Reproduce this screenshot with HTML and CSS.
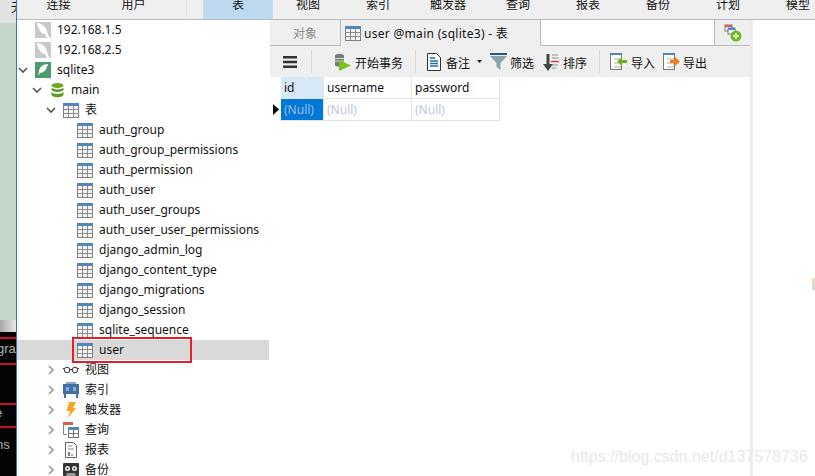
FILE: index.html
```html
<!DOCTYPE html>
<html lang="en">
<head>
    <meta charset="UTF-8">
    <meta name="viewport" content="width=device-width, initial-scale=1.0">
    <title>Navicat - user @main (sqlite3)</title>
    <link rel="stylesheet" href="styles.css">
</head>
<body>
    <svg class="defs" width="0" height="0">
        <symbol id="tbl" viewBox="0 0 16 16">
            <rect x="0.5" y="1.5" width="15" height="14" fill="#f4f4f4" stroke="#808080"/>
            <rect x="0" y="1" width="16" height="3" fill="#4f86bd"/>
            <path d="M5.5 4v11M10.5 4v11M0 7.5h16M0 11.5h16" stroke="#8c8c8c" fill="none"/>
        </symbol>
        <symbol id="conn" viewBox="0 0 16 16">
            <rect width="16" height="16" fill="#c9c9c9"/>
            <path d="M2 1C7 1 12 5 13 13L15 16H12L10 12C6 12 3 7 2 1Z" fill="#fff"/>
        </symbol>
        <symbol id="chev-d" viewBox="0 0 12 12">
            <path d="M2 4l4 4 4-4" fill="none" stroke="#555" stroke-width="1.6"/>
        </symbol>
        <symbol id="chev-r" viewBox="0 0 12 12">
            <path d="M4 2l4 4-4 4" fill="none" stroke="#999" stroke-width="1.6"/>
        </symbol>
    </svg>

    <div class="page">
        <!-- bit of the window behind -->
        <div class="behind">
            <div class="behind-top">无</div>
            <div class="behind-green"></div>
            <div class="behind-fade"></div>
            <div class="term">
                <div class="term-gap"></div>
                <div class="term-line first-line">gra</div>
                <div class="term-gap tall"></div>
                <div class="term-line short">e</div>
                <div class="term-line last">ns</div>
            </div>
        </div>

        <div class="app">
            <div class="menubar">
                <span class="menu wide">连接</span>
                <span class="menu wide">用户</span>
                <span class="menu-sep"></span>
                <span class="menu active">表</span>
                <span class="menu">视图</span>
                <span class="menu">索引</span>
                <span class="menu">触发器</span>
                <span class="menu">查询</span>
                <span class="menu">报表</span>
                <span class="menu">备份</span>
                <span class="menu">计划</span>
                <span class="menu">模型</span>
            </div>

            <div class="main">
                <div class="tree">
                    <div class="row"><span class="chev"></span><svg class="ico"><use href="#conn"/></svg>192.168.1.5</div>
                    <div class="row"><span class="chev"></span><svg class="ico"><use href="#conn"/></svg>192.168.2.5</div>
                    <div class="row"><svg class="chev"><use href="#chev-d"/></svg>
                        <svg class="ico" viewBox="0 0 16 16"><rect width="16" height="16" fill="#4b9c6c"/><path d="M13 2C8 2 4 5 4 10L3 14L5 11C9 11 12 7 13 2Z" fill="#fff"/></svg>sqlite3</div>
                    <div class="row lv1"><svg class="chev"><use href="#chev-d"/></svg>
                        <svg class="ico" viewBox="0 0 16 16"><ellipse cx="8.500" cy="3.500" rx="6" ry="2.500" fill="#6fa82a"/><path d="M2.500 5.500C4 8 13 8 14.500 5.500V8C13 10.500 4 10.500 2.500 8ZM2.500 10C4 12.500 13 12.500 14.500 10V13C13 16 4 16 2.500 13Z" fill="#5c9a1e"/></svg>main</div>
                    <div class="row lv2"><svg class="chev"><use href="#chev-d"/></svg><svg class="ico"><use href="#tbl"/></svg>表</div>
                    <div class="row lv3"><svg class="ico"><use href="#tbl"/></svg>auth_group</div>
                    <div class="row lv3"><svg class="ico"><use href="#tbl"/></svg>auth_group_permissions</div>
                    <div class="row lv3"><svg class="ico"><use href="#tbl"/></svg>auth_permission</div>
                    <div class="row lv3"><svg class="ico"><use href="#tbl"/></svg>auth_user</div>
                    <div class="row lv3"><svg class="ico"><use href="#tbl"/></svg>auth_user_groups</div>
                    <div class="row lv3"><svg class="ico"><use href="#tbl"/></svg>auth_user_user_permissions</div>
                    <div class="row lv3"><svg class="ico"><use href="#tbl"/></svg>django_admin_log</div>
                    <div class="row lv3"><svg class="ico"><use href="#tbl"/></svg>django_content_type</div>
                    <div class="row lv3"><svg class="ico"><use href="#tbl"/></svg>django_migrations</div>
                    <div class="row lv3"><svg class="ico"><use href="#tbl"/></svg>django_session</div>
                    <div class="row lv3"><svg class="ico"><use href="#tbl"/></svg>sqlite_sequence</div>
                    <div class="row lv3 selected"><svg class="ico"><use href="#tbl"/></svg>user<span class="redbox"></span></div>
                    <div class="row lv2"><svg class="chev"><use href="#chev-r"/></svg>
                        <svg class="ico" viewBox="0 0 16 16"><circle cx="4" cy="8" r="2.800" fill="none" stroke="#333"/><circle cx="12" cy="8" r="2.800" fill="none" stroke="#333"/><path d="M6.500 7.500h3M1 7L0 6M15 7l1-1" stroke="#333"/></svg>视图</div>
                    <div class="row lv2"><svg class="chev"><use href="#chev-r"/></svg>
                        <svg class="ico" viewBox="0 0 16 16"><path d="M3 0h10v2H3z" fill="#8aa6c8"/><rect y="2" width="16" height="10" fill="#3f6fa8"/><path d="M3 6h3M3 8h3M10 6h3M10 8h3" stroke="#dfe8f2"/><path d="M2 12v4M14 12v4" stroke="#3f6fa8" stroke-width="2"/></svg>索引</div>
                    <div class="row lv2"><svg class="chev"><use href="#chev-r"/></svg>
                        <svg class="ico" viewBox="0 0 16 16"><path d="M6 0h7L10 6h3L5 16l2-7H3.500Z" fill="#f5a623"/></svg>触发器</div>
                    <div class="row lv2"><svg class="chev"><use href="#chev-r"/></svg>
                        <svg class="ico" viewBox="0 0 16 16"><rect width="10" height="3" fill="#d0604a"/><path d="M.5 3v9.500H4" fill="none" stroke="#808080"/><rect x="5.500" y="5.500" width="10" height="10" fill="#fff" stroke="#707070"/><rect x="5" y="5" width="11" height="3" fill="#4f86bd"/><path d="M10.500 8v7M6 11.500h9" stroke="#707070"/></svg>查询</div>
                    <div class="row lv2"><svg class="chev"><use href="#chev-r"/></svg>
                        <svg class="ico" viewBox="0 0 16 16"><path d="M2.500.5h8l3 3v12h-11z" fill="#fff" stroke="#666"/><path d="M5 4h4M5 7h6" stroke="#888"/><path d="M5 10h2v4H5z" fill="#4f86bd"/><path d="M8 12h2v2H8z" fill="#e89a3c"/></svg>报表</div>
                    <div class="row lv2"><svg class="chev"><use href="#chev-r"/></svg>
                        <svg class="ico" viewBox="0 0 16 16"><rect y="1" width="16" height="13" rx="1" fill="#333"/><circle cx="4.500" cy="6.500" r="2.500" fill="#eee"/><circle cx="11.500" cy="6.500" r="2.500" fill="#eee"/><circle cx="4.500" cy="6.500" r="1" fill="#333"/><circle cx="11.500" cy="6.500" r="1" fill="#333"/><path d="M3 14l1-3h8l1 3z" fill="#999"/></svg>备份</div>
                </div>

                <div class="work">
                    <div class="tabs">
                        <div class="tab plain">对象</div>
                        <div class="tab current"><svg class="ico"><use href="#tbl"/></svg>user @main (sqlite3) - 表</div>
                        <div class="tab-blank"></div>
                        <div class="tab-add">
                            <svg width="18" height="18" viewBox="0 0 18 18"><rect x="1" y="1" width="7" height="6" fill="#fff" stroke="#8a6a5a"/><rect x="1" y="1" width="7" height="2" fill="#d0604a"/><rect x="4" y="4" width="7" height="6" fill="#fff" stroke="#5a7a9a"/><rect x="4" y="4" width="7" height="2" fill="#4f86bd"/><circle cx="12" cy="12" r="5.500" fill="#6cbb1c"/><path d="M12 9v6M9 12h6" stroke="#fff" stroke-width="1.500"/></svg>
                        </div>
                    </div>

                    <div class="toolbar">
                        <svg class="burger" width="14" height="12" viewBox="0 0 14 12"><path d="M0 0h14v2.500H0zM0 4.700h14v2.500H0zM0 9.400h14v2.500H0z" fill="#333"/></svg>
                        <span class="tool-sep s1"></span>
                        <span class="tool t-begin"><svg width="17" height="18" viewBox="0 0 17 18"><path d="M1 3c0-3 9-3 9 0v9c0 2-9 2-9 0z" fill="#7a7a7a"/><path d="M1 5.500h9M1 8h9" stroke="#ddd"/><path d="M5 7l12 5.500L5 18z" fill="#7cc21e"/></svg>开始事务</span>
                        <span class="tool-sep s2"></span>
                        <span class="tool t-memo"><svg width="14" height="18" viewBox="0 0 14 18"><path d="M.5.5h9l4 4v13H.5z" fill="#fff" stroke="#333"/><path d="M3 5h5M3 8h8M3 10.500h8M3 13h8" stroke="#1c6fa8" stroke-width="1.300"/></svg>备注</span>
                        <svg class="caret" width="5" height="3" viewBox="0 0 5 3"><path d="M0 0h5L2.500 3z" fill="#222"/></svg>
                        <span class="tool t-filter"><svg width="17" height="17" viewBox="0 0 17 17"><path d="M0 0h17v2H0z" fill="#1f5c78"/><path d="M0 3h17L10.500 10v7L6.500 14v-4z" fill="#8aa3a8"/></svg>筛选</span>
                        <span class="tool t-sort"><svg width="16" height="18" viewBox="0 0 16 18"><path d="M3.500 1h3v10H10l-5 7-5-7h3.500z" fill="#444"/><path d="M9 2h6M9 5h6M9 12h6M9 15h4" stroke="#7aa08c" stroke-width="1.200"/><path d="M8 8.500h8" stroke="#d8324a" stroke-width="1.400"/></svg>排序</span>
                        <span class="tool-sep s3"></span>
                        <span class="tool t-import"><svg width="17" height="17" viewBox="0 0 17 17"><rect x=".5" y=".5" width="11" height="16" fill="#fff" stroke="#777"/><path d="M0 0h12v2H0z" fill="#4f86bd"/><path d="M4 6h7M4 10h7M4 14h7" stroke="#aaa"/><path d="M7 8.500L12 4v3h5v3h-5v3z" fill="#6cb21c"/></svg>导入</span>
                        <span class="tool t-export"><svg width="17" height="17" viewBox="0 0 17 17"><rect x=".5" y=".5" width="11" height="16" fill="#fff" stroke="#777"/><path d="M0 0h12v2H0z" fill="#4f86bd"/><path d="M4 6h7M4 10h7M4 14h7" stroke="#aaa"/><path d="M17 8.500L12 4v3H7v3h5v3z" fill="#f57c10"/></svg>导出</span>
                    </div>

                    <div class="grid">
                        <div class="corner"></div>
                        <div class="cell first">id</div>
                        <div class="cell">username</div>
                        <div class="cell">password</div>
                        <div class="marker"><svg width="6" height="11" viewBox="0 0 6 11"><path d="M0 0l6 5.500L0 11z" fill="#000"/></svg></div>
                        <div class="cell null on">(Null)</div>
                        <div class="cell null">(Null)</div>
                        <div class="cell null">(Null)</div>
                    </div>
                </div>

                <div class="splitter"></div>
            </div>
        </div>

        <span class="stray"></span>
        <span class="watermark">https://blog.csdn.net/d137578736</span>
    </div>
</body>
</html>
```

FILE: styles.css
```css
* {
    box-sizing: border-box;
}

body {
    margin: 0;
    background: #fff;
    font-family: "Noto Sans", "Noto Sans CJK SC", sans-serif;
    font-size: 12px;
    color: #111;
}

.defs {
    position: absolute;
}

.page {
    position: relative;
    display: flex;
    width: 815px;
    height: 476px;
    overflow: hidden;
}

/* left strip */
.behind {
    display: flex;
    flex-direction: column;
    flex: none;
    width: 17px;
    height: 476px;
    border-right: 1px solid #3b6fd6;
    overflow: hidden;
}

.behind-top {
    height: 23px;
    background: #e2e2e2;
    line-height: 16px;
    text-indent: 11px;
    white-space: nowrap;
    overflow: hidden;
}

.behind-green {
    flex: 1;
    background: #c5d7c9;
}

.behind-fade {
    height: 12px;
    background: linear-gradient(90deg, #a8a8a8, #e6e6e6);
}

.term {
    height: 144px;
    background: #050505;
    color: #b0b0b0;
    font-family: "Liberation Sans", sans-serif;
    font-size: 13px;
    white-space: nowrap;
}

.term-gap {
    height: 7px;
    border-bottom: 2px solid #c8102a;
}

.term-gap.tall {
    height: 40px;
}

.term-line {
    height: 26px;
    border-bottom: 2px solid #c8102a;
}

.term-line.first-line {
    line-height: 20px;
    text-indent: -3px;
}

.term-line.short {
    height: 23px;
    line-height: 16px;
    text-indent: -5px;
}

.term-line.last {
    border-bottom: 0;
    line-height: 34px;
    text-indent: -4px;
}

/* app */
.app {
    display: flex;
    flex-direction: column;
    flex: 1;
    min-width: 0;
}

.menubar {
    display: flex;
    flex: none;
    height: 20px;
    padding-left: 4px;
    background: #efefef;
    border-bottom: 1px solid #b9b9b9;
    overflow: hidden;
}

.menu {
    flex: none;
    width: 70px;
    height: 19px;
    line-height: 10px;
    text-align: center;
}

.menu.wide {
    width: 75px;
}

.menu.active {
    background: #bddaf1;
}

.menu-sep {
    flex: none;
    width: 1px;
    height: 17px;
    margin: 0 16px 0 15px;
    background: #e0e0e0;
}

.main {
    display: flex;
    flex: 1;
    min-height: 0;
}

/* tree */
.tree {
    flex: none;
    width: 253px;
}

.row {
    position: relative;
    display: flex;
    align-items: center;
    height: 20px;
    padding-bottom: 2px;
    white-space: nowrap;
}

.lv1 {
    padding-left: 14px;
}

.lv2 {
    padding-left: 28px;
}

.lv3 {
    padding-left: 60px;
}

.row.selected {
    margin-right: 1px;
    background: #d9d9d9;
}

.chev {
    flex: none;
    width: 12px;
    height: 12px;
    margin-top: 2px;
    margin-right: 6px;
}

.ico {
    flex: none;
    width: 16px;
    height: 16px;
    margin-top: 2px;
    margin-right: 6px;
}

.redbox {
    position: absolute;
    left: 55px;
    top: -3px;
    width: 120px;
    height: 26px;
    border: 2px solid #e61f2b;
}

/* right side */
.work {
    display: flex;
    flex-direction: column;
    flex: none;
    width: 480px;
}

.tabs {
    display: flex;
    flex: none;
    height: 26px;
    background: #efefef;
}

.tab {
    display: flex;
    align-items: center;
    height: 26px;
}

.tab.plain {
    justify-content: center;
    width: 71px;
    color: #8a8a8a;
    border-right: 1px solid #b9b9b9;
    border-bottom: 1px solid #b9b9b9;
}

.tab.current {
    width: 199px;
    padding-left: 4px;
    letter-spacing: 0.3px;
}

.tab.current .ico {
    margin-top: 0;
    margin-right: 3px;
}

.tab-blank {
    width: 175px;
    background: #fff;
    border-left: 1px solid #b9b9b9;
    border-right: 1px solid #b9b9b9;
    border-bottom: 1px solid #b9b9b9;
}

.tab-add {
    flex: 1;
    padding: 4px 0 0 9px;
    border-bottom: 1px solid #b9b9b9;
}

.toolbar {
    display: flex;
    align-items: center;
    flex: none;
    height: 31px;
    background: #efefef;
}

.burger {
    margin-left: 13px;
}

.tool-sep {
    flex: none;
    width: 1px;
    height: 23px;
    background: #d6d6d6;
}

.tool {
    display: flex;
    align-items: center;
    padding-top: 2px;
    white-space: nowrap;
}

.tool svg {
    margin-top: -2px;
    margin-right: 4px;
}

.s1 {
    margin-left: 14px;
}

.t-begin {
    margin-left: 22px;
}

.s2 {
    margin-left: 12px;
}

.t-memo {
    margin-left: 11px;
}

.t-memo svg {
    margin-right: 5px;
}

.caret {
    margin-left: 7px;
}

.t-filter {
    margin-left: 8px;
}

.t-filter svg {
    margin-right: 3px;
}

.t-sort {
    margin-left: 9px;
}

.s3 {
    margin-left: 12px;
}

.t-import {
    margin-left: 10px;
}

.t-export {
    margin-left: 8px;
}

.t-export svg {
    margin-right: 3px;
}

.grid {
    display: grid;
    grid-template-columns: 11px 43px 88px 88px;
    grid-auto-rows: 22px;
    width: 230px;
}

.cell {
    padding-left: 3px;
    line-height: 21px;
    border-right: 1px solid #e3e3e3;
    border-bottom: 1px solid #e3e3e3;
}

.marker {
    padding-left: 3px;
}

.marker svg {
    margin-top: 5px;
    display: block;
}

.first {
    background: #d7e8f7;
}

.null {
    color: #bcc6da;
}

.null.on {
    background: #0078d7;
    color: #9fbde0;
}

.splitter {
    flex: none;
    width: 3px;
    background: #ececec;
}

/* overlays */
.stray {
    position: absolute;
    right: 0;
    top: 278px;
    width: 3px;
    height: 12px;
    background: linear-gradient(#f5d9b0, #c9d9f2);
}

.watermark {
    position: absolute;
    left: 571px;
    top: 447px;
    font-family: "Liberation Sans", sans-serif;
    font-size: 16px;
    line-height: 20px;
    color: #e8e8e8;
    white-space: nowrap;
}
```
